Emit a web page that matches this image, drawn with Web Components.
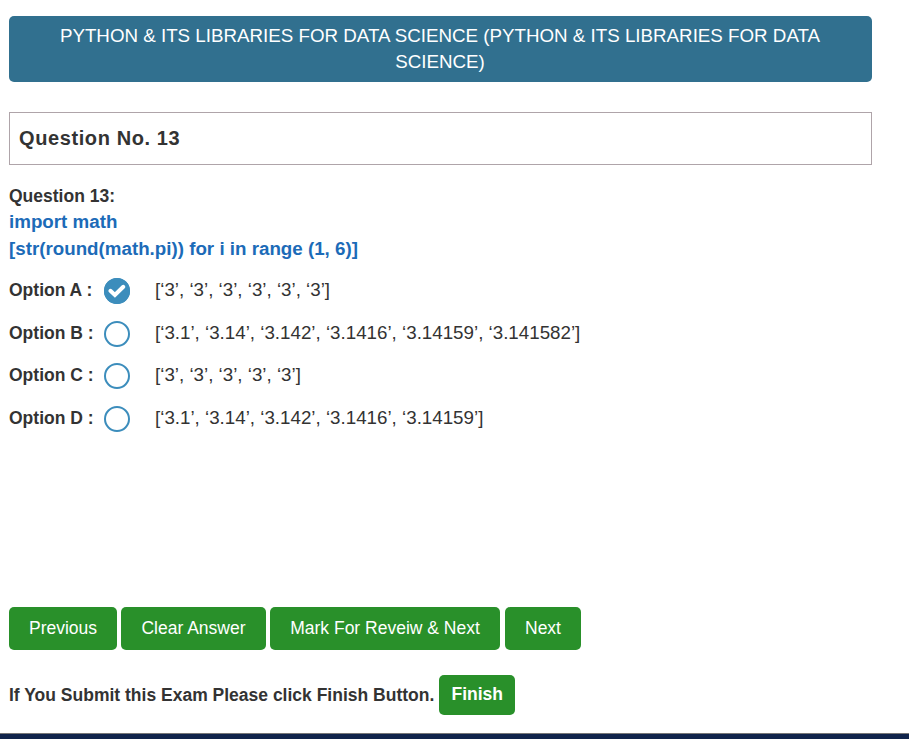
<!DOCTYPE html>
<html lang="en">
<head>
<meta charset="utf-8">
<title>Exam question</title>
<style>
  html, body { margin: 0; height: 100%; background: #fff; }
  body { font: 17.5px/25px "Liberation Sans", Arial, sans-serif; color: #333; overflow: hidden; }
</style>
</head>
<body>
<exam-page>
  <exam-banner>PYTHON &amp; ITS LIBRARIES FOR DATA SCIENCE (PYTHON &amp; ITS LIBRARIES FOR DATA SCIENCE)</exam-banner>
  <question-title>Question No. 13</question-title>
  <question-text label="Question 13:"><div>import math</div><div>[str(round(math.pi)) for i in range (1, 6)]</div></question-text>
  <answer-list>
    <answer-option label="Option A :" checked>[‘3’, ‘3’, ‘3’, ‘3’, ‘3’, ‘3’]</answer-option>
    <answer-option label="Option B :">[‘3.1’, ‘3.14’, ‘3.142’, ‘3.1416’, ‘3.14159’, ‘3.141582’]</answer-option>
    <answer-option label="Option C :">[‘3’, ‘3’, ‘3’, ‘3’, ‘3’]</answer-option>
    <answer-option label="Option D :">[‘3.1’, ‘3.14’, ‘3.142’, ‘3.1416’, ‘3.14159’]</answer-option>
  </answer-list>
  <button-row slot="footer">
    <exam-button style="width:108px">Previous</exam-button>
    <exam-button style="width:145px">Clear Answer</exam-button>
    <exam-button style="width:230px;margin-right:1px">Mark For Reveiw &amp; Next</exam-button>
    <exam-button style="width:76px">Next</exam-button>
  </button-row>
  <finish-row slot="footer">If You Submit this Exam Please click Finish Button.<exam-button slot="action" compact>Finish</exam-button></finish-row>
  <page-footer slot="footer"></page-footer>
</exam-page>
<script>
const define = (name, html, setup) => {
  const template = document.createElement('template');
  template.innerHTML = html;
  customElements.define(name, class extends HTMLElement {
    constructor() {
      super();
      this.attachShadow({ mode: 'open' }).append(template.content.cloneNode(true));
    }
    connectedCallback() { if (setup) setup(this, this.shadowRoot); }
  });
};
const setLabel = (host, root) => { root.querySelector('.label').textContent = host.getAttribute('label'); };

define('exam-page', `
  <style>
    :host { display: flex; flex-direction: column; height: 739px; box-sizing: border-box; padding-top: 16px; }
    main { flex: 1; width: 863px; margin-left: 9px; }
  </style>
  <main><slot></slot></main>
  <slot name="footer"></slot>`);

define('exam-banner', `
  <style>
    :host { display: block; box-sizing: border-box; height: 66px; padding: 7px 20px 6px 19px; border-radius: 5px;
      background: #31708f; color: #fff; font-size: 18.75px; line-height: 26px; text-align: center; }
  </style><slot></slot>`);

define('question-title', `
  <style>
    :host { display: flex; align-items: center; box-sizing: border-box; height: 53px; margin-top: 30px;
      padding: 0 9px 1px; border: 1px solid #afa4a9; font-size: 20px; font-weight: 700; letter-spacing: .6px; }
  </style><slot></slot>`);

define('question-text', `
  <style>
    :host { display: block; margin-top: 18px; font-weight: 700; }
    .label { height: 25px; line-height: 26px; }
    .code { color: #1c6bb8; font-size: 18.75px; line-height: 27px; }
  </style><div class="label"></div><div class="code"><slot></slot></div>`, setLabel);

define('answer-list', `
  <style>
    :host { display: grid; grid-template-rows: 43px 42px 43px 43px; margin-top: 8px; }
  </style><slot></slot>`);

define('answer-option', `
  <style>
    :host { display: grid; grid-template-columns: 95px 51px 1fr; align-items: start; padding-top: 7px; }
    .label { font-weight: 700; line-height: 26px; }
    .text { font-size: 18.75px; line-height: 26px; }
    svg { display: block; width: 26px; height: 26px; margin-top: 1px; }
    .on { display: none; }
    :host([checked]) .on { display: block; }
  </style>
  <span class="label"></span>
  <svg viewBox="0 0 26 26">
    <circle cx="13" cy="13" r="12" fill="#fff" stroke="#3c8dbc" stroke-width="2"/>
    <g class="on">
      <circle cx="13" cy="13" r="13" fill="#3c8dbc"/>
      <path d="M6.4 12.8 L10.9 17 L19.3 8.8" fill="none" stroke="#fff" stroke-width="4" stroke-linecap="round" stroke-linejoin="miter"/>
    </g>
  </svg>
  <span class="text"><slot></slot></span>`, setLabel);

define('button-row', `
  <style>
    :host { display: flex; gap: 4px; margin-left: 9px; }
  </style><slot></slot>`);

define('exam-button', `
  <style>
    :host { display: flex; }
    button { flex: 1; height: 43px; padding: 0 0 1px; border: 0; border-radius: 5px; background: #29902a;
      color: #fff; font: inherit; white-space: nowrap; }
    :host([compact]) { width: 76px; }
    :host([compact]) button { height: 40px; padding-bottom: 2px; }
  </style><button><slot></slot></button>`);

define('finish-row', `
  <style>
    :host { display: flex; align-items: center; gap: 5px; height: 40px; margin: 25px 0 18px 9px; font-weight: 700; }
  </style><span><slot></slot></span><slot name="action"></slot>`);

define('page-footer', `
  <style>
    :host { display: block; box-sizing: border-box; height: 6px; border-top: 1px solid #777; background: #10244b; }
  </style>`);
</script>
</body>
</html>
